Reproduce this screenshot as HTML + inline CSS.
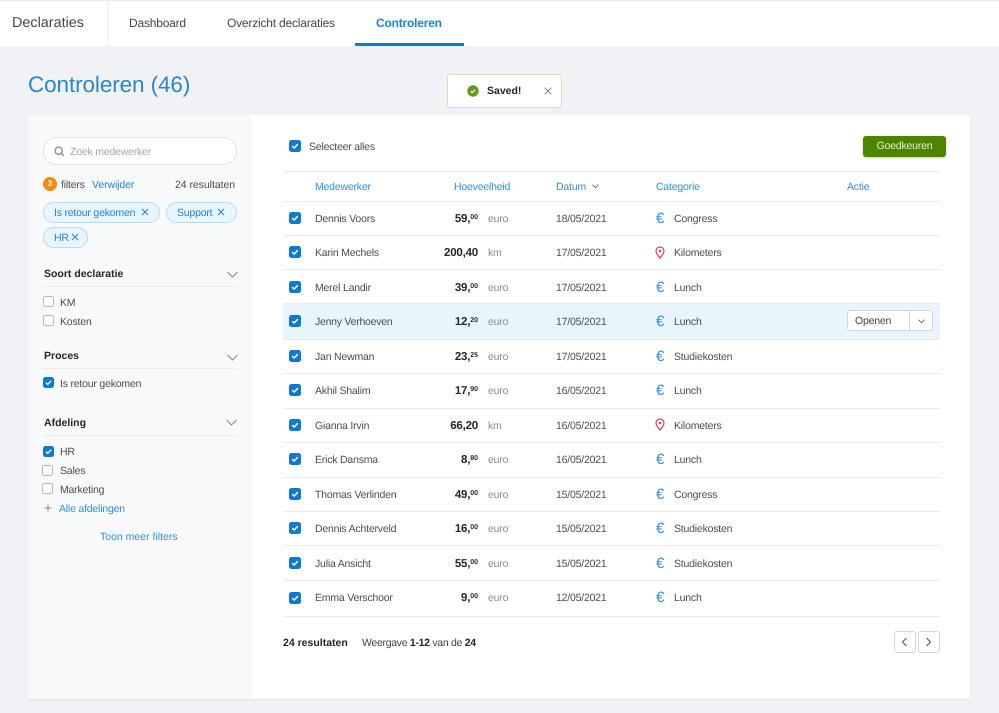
<!DOCTYPE html>
<html><head><meta charset="utf-8"><style>
*{box-sizing:border-box}
html,body{margin:0;padding:0}
body{width:999px;height:713px;overflow:hidden;position:relative;background:#f0f2f6;font-family:"Liberation Sans",sans-serif;font-size:10.5px;color:#4a4d52;letter-spacing:-.2px;text-rendering:geometricPrecision}
div,span.a,svg.a{position:absolute}
.t{white-space:nowrap;line-height:16px;height:16px;margin-top:1px}
.nav{font-size:12px;color:#44474b}
.b{color:#1b86d8}
.h{color:#2b93e0}
.d{color:#23272b;font-weight:bold;letter-spacing:0}
.l{height:1px;background:#e9ebee}
.cb{width:12px;height:12px;border-radius:2.5px;background:#0f7ad0}
.cb svg{position:absolute;left:0;top:0}
.ub{width:11px;height:11px;border-radius:2.5px;background:#fff;border:1px solid #b4b7bb}
.n{font-size:11.5px;font-weight:bold;color:#23272b;text-align:right;letter-spacing:-.2px;left:400px;width:78px}
.n sup{font-size:7px;vertical-align:baseline;position:relative;top:-3.5px;letter-spacing:0}
.u{color:#8a8d91}
.e{font-size:15px;letter-spacing:0;color:#2b93e0;left:656px;margin-top:2px}
.chip{height:21px;border:1px solid #b4dcf9;background:#e9f5fe;border-radius:11px;color:#1b86d8;line-height:20px;white-space:nowrap}
</style></head><body>
<div style="left:0;top:0;width:999px;height:46px;background:#fff;border-top:1px solid #e9ebee"></div>
<div style="left:108px;top:1px;width:1px;height:45px;background:#f0f1f3"></div>
<div class="t" style="left:12px;top:14px;font-size:14.4px;letter-spacing:0;color:#44474b">Declaraties</div>
<div class="t nav" style="left:129px;top:14px">Dashboard</div>
<div class="t nav" style="left:227px;top:14px">Overzicht declaraties</div>
<div class="t b" style="left:376px;top:14px;font-size:12px;font-weight:bold">Controleren</div>
<div style="left:355px;top:43px;width:109px;height:3px;background:#0f7ad0"></div>
<div class="t" style="left:28px;top:70px;height:28px;line-height:28px;font-size:22.5px;color:#2a87cf;letter-spacing:-.1px">Controleren (46)</div>

<div style="left:447px;top:74px;width:115px;height:34px;background:#fff;border:1px solid #cfe3b4;border-radius:3px"></div>
<svg class="a" style="left:467px;top:85px" width="12" height="12" viewBox="0 0 12 12"><circle cx="6" cy="6" r="5.7" fill="#5a9e14"/><path d="M3.800 6.200 5.300 7.600 8.200 4.700" fill="none" stroke="#fff" stroke-width="1.200"/></svg>
<div class="t d" style="left:487px;top:82px;font-size:10.500px">Saved!</div>
<svg class="a" style="left:544px;top:87px" width="8" height="8" viewBox="0 0 8 8"><path d="M.7.7 7.300 7.300M7.300.7.700 7.300" stroke="#77797d" stroke-width="1"/></svg>

<div style="left:28px;top:115px;width:942px;height:584px;background:#fff;box-shadow:0 1px 1px #e3e5e9"></div>
<div style="left:28px;top:115px;width:224px;height:584px;background:#f8f9fb"></div>

<div style="left:43px;top:137px;width:194px;height:28px;background:#fff;border:1px solid #e0e2e6;border-radius:14px"></div>
<svg class="a" style="left:54px;top:146px" width="11" height="11" viewBox="0 0 11 11"><circle cx="4.700" cy="4.700" r="3.600" fill="none" stroke="#85888c" stroke-width="1.300"/><path d="M7.400 7.400 10 10" stroke="#85888c" stroke-width="1.400"/></svg>
<div class="t" style="left:70px;top:143px;color:#a4a7ab">Zoek medewerker</div>
<div style="left:43px;top:177px;width:14px;height:14px;border-radius:50%;background:#f28c0f;color:#fff;font-size:8px;font-weight:bold;text-align:center;line-height:14px;letter-spacing:0">3</div>
<div class="t" style="left:61px;top:176px">filters</div>
<div class="t b" style="left:92px;top:176px;letter-spacing:-.1px">Verwijder</div>
<div class="t" style="left:175px;top:176px;letter-spacing:-.05px">24 resultaten</div>
<div class="chip" style="left:43px;top:202px;width:117px;padding-left:10px">Is retour gekomen</div>
<svg class="a" style="left:141px;top:208px" width="8" height="8" viewBox="0 0 8 8"><path d="M1 1 7 7M7 1 1 7" stroke="#1b86d8"/></svg>
<div class="chip" style="left:166px;top:202px;width:71px;padding-left:10px">Support</div>
<svg class="a" style="left:217px;top:208px" width="8" height="8" viewBox="0 0 8 8"><path d="M1 1 7 7M7 1 1 7" stroke="#1b86d8"/></svg>
<div class="chip" style="left:43px;top:227px;width:45px;padding-left:10px">HR</div>
<svg class="a" style="left:71px;top:233px" width="8" height="8" viewBox="0 0 8 8"><path d="M1 1 7 7M7 1 1 7" stroke="#1b86d8"/></svg>

<div class="t d" style="left:44px;top:265px">Soort declaratie</div>
<svg class="a" style="left:227px;top:271px" width="11" height="7" viewBox="0 0 11 7"><path d="M.5 1 5.500 6 10.500 1" fill="none" stroke="#85888c"/></svg>
<div class="l" style="left:43px;top:286px;width:194px"></div>
<div class="ub" style="left:43px;top:296px"></div><div class="t" style="left:60px;top:294px">KM</div>
<div class="ub" style="left:43px;top:315px"></div><div class="t" style="left:60px;top:313px">Kosten</div>
<div class="t d" style="left:44px;top:347px">Proces</div>
<svg class="a" style="left:227px;top:354px" width="11" height="7" viewBox="0 0 11 7"><path d="M.5 1 5.500 6 10.500 1" fill="none" stroke="#85888c"/></svg>
<div class="l" style="left:43px;top:368px;width:194px"></div>
<div class="cb" style="left:43px;top:377px;width:11px;height:11px"><svg width="11" height="11" viewBox="0 0 12 12"><path d="M3.200 6.200 5.200 8 8.800 4.200" fill="none" stroke="#fff" stroke-width="1.500"/></svg></div>
<div class="t" style="left:60px;top:375px">Is retour gekomen</div>
<div class="t d" style="left:44px;top:414px">Afdeling</div>
<svg class="a" style="left:226px;top:419px" width="11" height="7" viewBox="0 0 11 7"><path d="M.5 1 5.500 6 10.500 1" fill="none" stroke="#85888c"/></svg>
<div class="l" style="left:43px;top:435px;width:194px"></div>
<div class="cb" style="left:43px;top:446px;width:11px;height:11px"><svg width="11" height="11" viewBox="0 0 12 12"><path d="M3.200 6.200 5.200 8 8.800 4.200" fill="none" stroke="#fff" stroke-width="1.500"/></svg></div>
<div class="t" style="left:60px;top:443px">HR</div>
<div class="ub" style="left:42px;top:465px"></div><div class="t" style="left:60px;top:462px">Sales</div>
<div class="ub" style="left:42px;top:483px"></div><div class="t" style="left:60px;top:481px">Marketing</div>
<svg class="a" style="left:44px;top:504px" width="8" height="8" viewBox="0 0 8 8"><path d="M4 .5V7.500M.5 4H7.500" stroke="#85888c"/></svg>
<div class="t h" style="left:59px;top:500px">Alle afdelingen</div>
<div class="t h" style="left:100px;top:528px;letter-spacing:0">Toon meer filters</div>

<div class="cb" style="left:289px;top:140px"><svg width="12" height="12" viewBox="0 0 12 12"><path d="M3.200 6.200 5.200 8 8.800 4.200" fill="none" stroke="#fff" stroke-width="1.500"/></svg></div>
<div class="t" style="left:309px;top:138px">Selecteer alles</div>
<div style="left:863px;top:136px;width:83px;height:21px;background:#4d8500;border-radius:3px;box-shadow:0 1px 2px #c5c8cc;color:#e6f0d8;text-align:center;line-height:21px">Goedkeuren</div>

<div class="l" style="left:283px;top:171px;width:657px"></div>
<div class="t h" style="left:315px;top:178px">Medewerker</div>
<div class="t h" style="left:454px;top:178px">Hoeveelheid</div>
<div class="t h" style="left:556px;top:178px">Datum</div>
<svg class="a" style="left:592px;top:184px" width="7" height="5" viewBox="0 0 7 5"><path d="M.5.700 3.500 3.700 6.500.700" fill="none" stroke="#6d7074"/></svg>
<div class="t h" style="left:656px;top:178px">Categorie</div>
<div class="t h" style="left:847px;top:178px">Actie</div>
<div class="l" style="left:283px;top:201px;width:657px"></div>

<div style="left:283px;top:304px;width:657px;height:35px;background:#e9f5fd"></div>
<div class="l" style="left:283px;top:235px;width:657px"></div>
<div class="l" style="left:283px;top:269px;width:657px"></div>
<div class="l" style="left:283px;top:303px;width:657px"></div>
<div class="l" style="left:283px;top:339px;width:657px"></div>
<div class="l" style="left:283px;top:373px;width:657px"></div>
<div class="l" style="left:283px;top:408px;width:657px"></div>
<div class="l" style="left:283px;top:442px;width:657px"></div>
<div class="l" style="left:283px;top:477px;width:657px"></div>
<div class="l" style="left:283px;top:511px;width:657px"></div>
<div class="l" style="left:283px;top:545px;width:657px"></div>
<div class="l" style="left:283px;top:580px;width:657px"></div>
<div class="l" style="left:283px;top:616px;width:657px"></div>

<!-- row 1 -->
<div class="cb" style="left:289px;top:212px"><svg width="12" height="12" viewBox="0 0 12 12"><path d="M3.200 6.200 5.200 8 8.800 4.200" fill="none" stroke="#fff" stroke-width="1.500"/></svg></div>
<div class="t" style="left:315px;top:210px">Dennis Voors</div>
<div class="t n" style="top:210px">59,<sup>00</sup></div>
<div class="t u" style="left:488px;top:210px">euro</div>
<div class="t" style="left:556px;top:210px">18/05/2021</div>
<div class="t e" style="top:209px">€</div>
<div class="t" style="left:674px;top:210px">Congress</div>
<!-- row 2 -->
<div class="cb" style="left:289px;top:246px"><svg width="12" height="12" viewBox="0 0 12 12"><path d="M3.200 6.200 5.200 8 8.800 4.200" fill="none" stroke="#fff" stroke-width="1.500"/></svg></div>
<div class="t" style="left:315px;top:244px">Karin Mechels</div>
<div class="t n" style="top:244px">200,40</div>
<div class="t u" style="left:488px;top:244px">km</div>
<div class="t" style="left:556px;top:244px">17/05/2021</div>
<svg class="a" style="left:655px;top:246px" width="10" height="13" viewBox="0 0 10 13"><path d="M5 12C3 9.500 1 7.500 1 5A4 4 0 0 1 9 5C9 7.500 7 9.500 5 12Z" fill="none" stroke="#e2404f" stroke-width="1.200"/><circle cx="5" cy="5" r="1.300" fill="#e2404f"/></svg>
<div class="t" style="left:674px;top:244px">Kilometers</div>
<!-- row 3 -->
<div class="cb" style="left:289px;top:281px"><svg width="12" height="12" viewBox="0 0 12 12"><path d="M3.200 6.200 5.200 8 8.800 4.200" fill="none" stroke="#fff" stroke-width="1.500"/></svg></div>
<div class="t" style="left:315px;top:279px">Merel Landir</div>
<div class="t n" style="top:279px">39,<sup>00</sup></div>
<div class="t u" style="left:488px;top:279px">euro</div>
<div class="t" style="left:556px;top:279px">17/05/2021</div>
<div class="t e" style="top:278px">€</div>
<div class="t" style="left:674px;top:279px">Lunch</div>
<!-- row 4 -->
<div class="cb" style="left:289px;top:315px"><svg width="12" height="12" viewBox="0 0 12 12"><path d="M3.200 6.200 5.200 8 8.800 4.200" fill="none" stroke="#fff" stroke-width="1.500"/></svg></div>
<div class="t" style="left:315px;top:313px;letter-spacing:-.25px">Jenny Verhoeven</div>
<div class="t n" style="top:313px">12,<sup>20</sup></div>
<div class="t u" style="left:488px;top:313px">euro</div>
<div class="t" style="left:556px;top:313px">17/05/2021</div>
<div class="t e" style="top:312px">€</div>
<div class="t" style="left:674px;top:313px">Lunch</div>
<div style="left:847px;top:310px;width:86px;height:21px;background:#fff;border:1px solid #d3d6da;border-radius:3px"></div>
<div style="left:909px;top:311px;width:1px;height:19px;background:#d3d6da"></div>
<div class="t" style="left:855px;top:312px;color:#3f4246">Openen</div>
<svg class="a" style="left:918px;top:319px" width="7" height="5" viewBox="0 0 7 5"><path d="M.5.700 3.500 3.700 6.500.700" fill="none" stroke="#6d7074"/></svg>
<!-- row 5 -->
<div class="cb" style="left:289px;top:350px"><svg width="12" height="12" viewBox="0 0 12 12"><path d="M3.200 6.200 5.200 8 8.800 4.200" fill="none" stroke="#fff" stroke-width="1.500"/></svg></div>
<div class="t" style="left:315px;top:348px">Jan Newman</div>
<div class="t n" style="top:348px">23,<sup>25</sup></div>
<div class="t u" style="left:488px;top:348px">euro</div>
<div class="t" style="left:556px;top:348px">17/05/2021</div>
<div class="t e" style="top:347px">€</div>
<div class="t" style="left:674px;top:348px">Studiekosten</div>
<!-- row 6 -->
<div class="cb" style="left:289px;top:384px"><svg width="12" height="12" viewBox="0 0 12 12"><path d="M3.200 6.200 5.200 8 8.800 4.200" fill="none" stroke="#fff" stroke-width="1.500"/></svg></div>
<div class="t" style="left:315px;top:382px">Akhil Shalim</div>
<div class="t n" style="top:382px">17,<sup>90</sup></div>
<div class="t u" style="left:488px;top:382px">euro</div>
<div class="t" style="left:556px;top:382px">16/05/2021</div>
<div class="t e" style="top:381px">€</div>
<div class="t" style="left:674px;top:382px">Lunch</div>
<!-- row 7 -->
<div class="cb" style="left:289px;top:419px"><svg width="12" height="12" viewBox="0 0 12 12"><path d="M3.200 6.200 5.200 8 8.800 4.200" fill="none" stroke="#fff" stroke-width="1.500"/></svg></div>
<div class="t" style="left:315px;top:417px">Gianna Irvin</div>
<div class="t n" style="top:417px">66,20</div>
<div class="t u" style="left:488px;top:417px">km</div>
<div class="t" style="left:556px;top:417px">16/05/2021</div>
<svg class="a" style="left:655px;top:418px" width="10" height="13" viewBox="0 0 10 13"><path d="M5 12C3 9.500 1 7.500 1 5A4 4 0 0 1 9 5C9 7.500 7 9.500 5 12Z" fill="none" stroke="#e2404f" stroke-width="1.200"/><circle cx="5" cy="5" r="1.300" fill="#e2404f"/></svg>
<div class="t" style="left:674px;top:417px">Kilometers</div>
<!-- row 8 -->
<div class="cb" style="left:289px;top:453px"><svg width="12" height="12" viewBox="0 0 12 12"><path d="M3.200 6.200 5.200 8 8.800 4.200" fill="none" stroke="#fff" stroke-width="1.500"/></svg></div>
<div class="t" style="left:315px;top:451px">Erick Dansma</div>
<div class="t n" style="top:451px">8,<sup>80</sup></div>
<div class="t u" style="left:488px;top:451px">euro</div>
<div class="t" style="left:556px;top:451px">16/05/2021</div>
<div class="t e" style="top:450px">€</div>
<div class="t" style="left:674px;top:451px">Lunch</div>
<!-- row 9 -->
<div class="cb" style="left:289px;top:488px"><svg width="12" height="12" viewBox="0 0 12 12"><path d="M3.200 6.200 5.200 8 8.800 4.200" fill="none" stroke="#fff" stroke-width="1.500"/></svg></div>
<div class="t" style="left:315px;top:486px">Thomas Verlinden</div>
<div class="t n" style="top:486px">49,<sup>00</sup></div>
<div class="t u" style="left:488px;top:486px">euro</div>
<div class="t" style="left:556px;top:486px">15/05/2021</div>
<div class="t e" style="top:485px">€</div>
<div class="t" style="left:674px;top:486px">Congress</div>
<!-- row 10 -->
<div class="cb" style="left:289px;top:522px"><svg width="12" height="12" viewBox="0 0 12 12"><path d="M3.200 6.200 5.200 8 8.800 4.200" fill="none" stroke="#fff" stroke-width="1.500"/></svg></div>
<div class="t" style="left:315px;top:520px">Dennis Achterveld</div>
<div class="t n" style="top:520px">16,<sup>00</sup></div>
<div class="t u" style="left:488px;top:520px">euro</div>
<div class="t" style="left:556px;top:520px">15/05/2021</div>
<div class="t e" style="top:519px">€</div>
<div class="t" style="left:674px;top:520px">Studiekosten</div>
<!-- row 11 -->
<div class="cb" style="left:289px;top:557px"><svg width="12" height="12" viewBox="0 0 12 12"><path d="M3.200 6.200 5.200 8 8.800 4.200" fill="none" stroke="#fff" stroke-width="1.500"/></svg></div>
<div class="t" style="left:315px;top:555px">Julia Ansicht</div>
<div class="t n" style="top:555px">55,<sup>00</sup></div>
<div class="t u" style="left:488px;top:555px">euro</div>
<div class="t" style="left:556px;top:555px">15/05/2021</div>
<div class="t e" style="top:554px">€</div>
<div class="t" style="left:674px;top:555px">Studiekosten</div>
<!-- row 12 -->
<div class="cb" style="left:289px;top:592px"><svg width="12" height="12" viewBox="0 0 12 12"><path d="M3.200 6.200 5.200 8 8.800 4.200" fill="none" stroke="#fff" stroke-width="1.500"/></svg></div>
<div class="t" style="left:315px;top:589px">Emma Verschoor</div>
<div class="t n" style="top:589px">9,<sup>00</sup></div>
<div class="t u" style="left:488px;top:589px">euro</div>
<div class="t" style="left:556px;top:589px">12/05/2021</div>
<div class="t e" style="top:588px">€</div>
<div class="t" style="left:674px;top:589px">Lunch</div>

<div class="t d" style="left:283px;top:634px">24 resultaten</div>
<div class="t" style="left:362px;top:634px;color:#3f4246;letter-spacing:-.3px">Weergave <b style="color:#23272b">1-12</b> van de <b style="color:#23272b">24</b></div>
<div style="left:894px;top:631px;width:22px;height:22px;background:#fff;border:1px solid #d5d7da;border-radius:3px"></div>
<div style="left:918px;top:631px;width:22px;height:22px;background:#fff;border:1px solid #d5d7da;border-radius:3px"></div>
<svg class="a" style="left:901px;top:637px" width="7" height="10" viewBox="0 0 7 10"><path d="M5.500 1 1.500 5 5.500 9" fill="none" stroke="#55585c" stroke-width="1.100"/></svg>
<svg class="a" style="left:925px;top:637px" width="7" height="10" viewBox="0 0 7 10"><path d="M1.500 1 5.500 5 1.500 9" fill="none" stroke="#55585c" stroke-width="1.100"/></svg>
</body></html>
